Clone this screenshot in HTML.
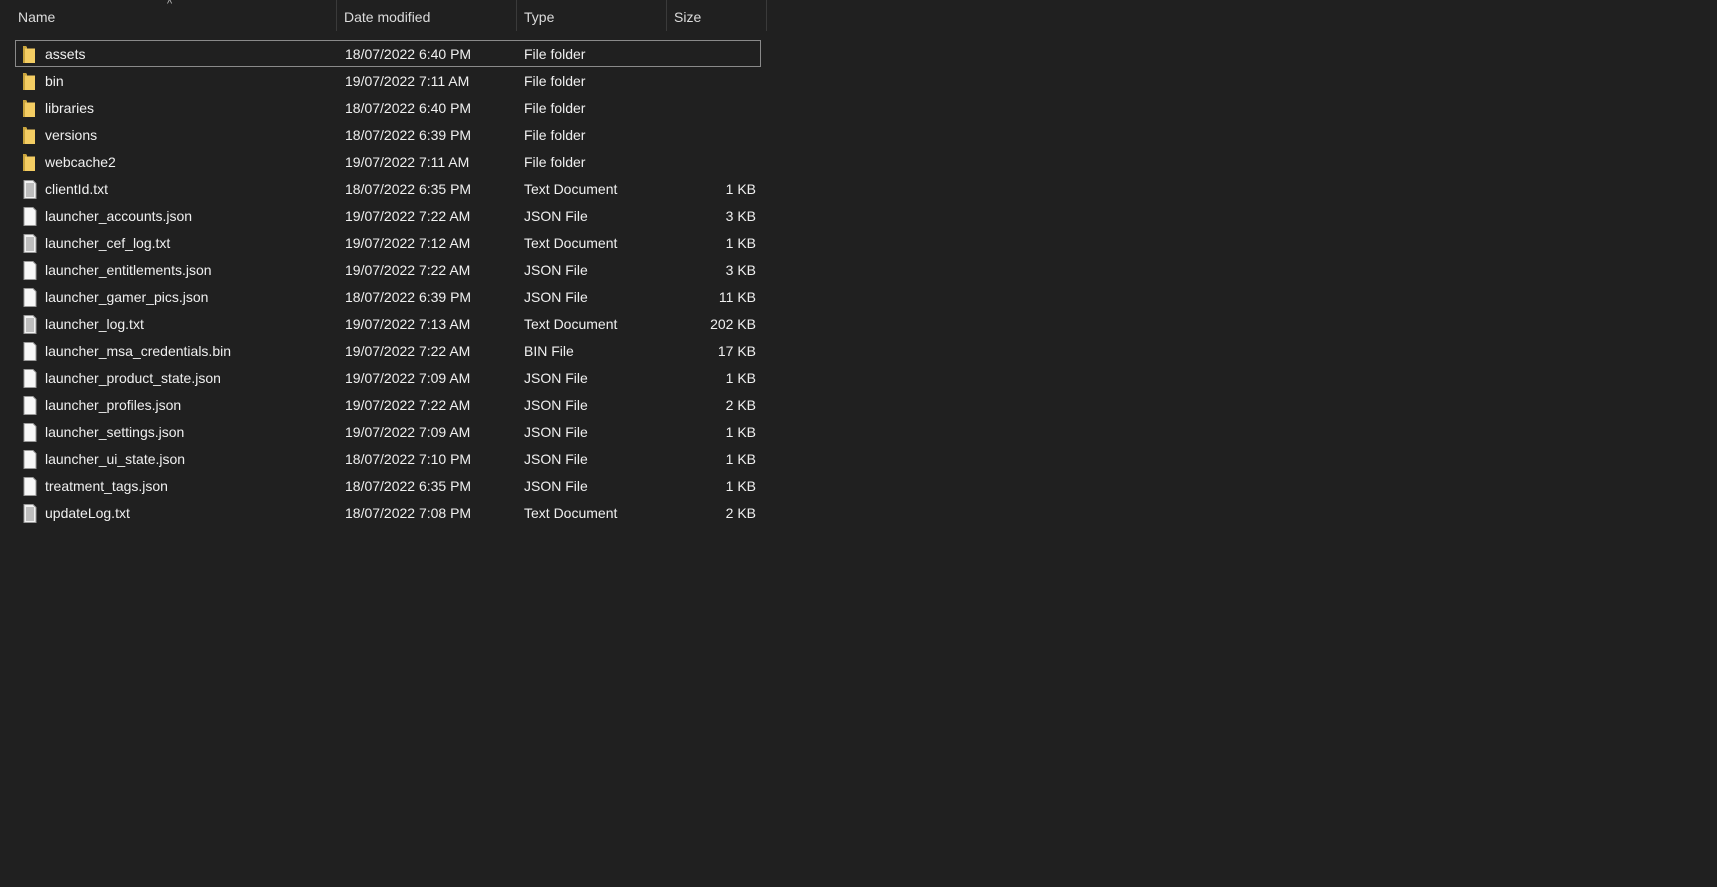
<!DOCTYPE html>
<html><head><style>
body{margin:0;background:#202020;width:1717px;height:887px;overflow:hidden;font-family:"Segoe UI","Liberation Sans",sans-serif;font-size:14px;color:#f0f0f0;position:relative}
.h{position:absolute;top:9px;color:#dcdcdc;font-size:14px}
.sep{position:absolute;top:0;width:1px;height:31px;background:#3a3a3a}
.r{position:absolute;left:15px;width:746px;height:27px;line-height:29px}
.r span{position:absolute;white-space:nowrap}
.n{left:30px}.d{left:330px}.t{left:509px}.s{right:5px}
.ic{position:absolute;left:7px;top:5px}
.sel{box-shadow:inset 0 0 0 1px #8a8a8a}
</style></head><body>
<div class="h" style="left:18px">Name</div>
<div class="h" style="left:344px">Date modified</div>
<div class="h" style="left:524px">Type</div>
<div class="h" style="left:674px">Size</div>
<div style="position:absolute;left:167px;top:-2px;color:#bbb;font-size:11px">^</div>
<div class="sep" style="left:336px"></div><div class="sep" style="left:516px"></div><div class="sep" style="left:666px"></div><div class="sep" style="left:766px"></div>
<div id="rows"></div>
<script>
const F='<svg class="ic" width="16" height="19" viewBox="0 0 16 19"><path d="M1 1h3l1 1v16H1z" fill="#c9a43d"/><path d="M3 3.5h10v14.5H3z" fill="#f4cd63"/></svg>';
const T='<svg class="ic" width="16" height="19" viewBox="0 0 16 19"><path d="M2 0.5h9l3 3v15H2z" fill="#f2f2f2" stroke="#999"/><path d="M4 4h8M4 6h8M4 8h8M4 10h8M4 12h8M4 14h8M4 16h8" stroke="#8a8a8a" stroke-width="1"/></svg>';
const J='<svg class="ic" width="16" height="19" viewBox="0 0 16 19"><path d="M2 0.5h9l3 3v15H2z" fill="#f7f7f7" stroke="#999"/></svg>';
const d=[["assets","18/07/2022 6:40 PM","File folder","",F],["bin","19/07/2022 7:11 AM","File folder","",F],["libraries","18/07/2022 6:40 PM","File folder","",F],["versions","18/07/2022 6:39 PM","File folder","",F],["webcache2","19/07/2022 7:11 AM","File folder","",F],["clientId.txt","18/07/2022 6:35 PM","Text Document","1 KB",T],["launcher_accounts.json","19/07/2022 7:22 AM","JSON File","3 KB",J],["launcher_cef_log.txt","19/07/2022 7:12 AM","Text Document","1 KB",T],["launcher_entitlements.json","19/07/2022 7:22 AM","JSON File","3 KB",J],["launcher_gamer_pics.json","18/07/2022 6:39 PM","JSON File","11 KB",J],["launcher_log.txt","19/07/2022 7:13 AM","Text Document","202 KB",T],["launcher_msa_credentials.bin","19/07/2022 7:22 AM","BIN File","17 KB",J],["launcher_product_state.json","19/07/2022 7:09 AM","JSON File","1 KB",J],["launcher_profiles.json","19/07/2022 7:22 AM","JSON File","2 KB",J],["launcher_settings.json","19/07/2022 7:09 AM","JSON File","1 KB",J],["launcher_ui_state.json","18/07/2022 7:10 PM","JSON File","1 KB",J],["treatment_tags.json","18/07/2022 6:35 PM","JSON File","1 KB",J],["updateLog.txt","18/07/2022 7:08 PM","Text Document","2 KB",T]];
let h='';d.forEach((r,i)=>{h+=`<div class="r${i==0?' sel':''}" style="top:${40+i*27}px">${r[4]}<span class="n">${r[0]}</span><span class="d">${r[1]}</span><span class="t">${r[2]}</span><span class="s">${r[3]}</span></div>`});
document.getElementById('rows').innerHTML=h;
</script>
</body></html>
